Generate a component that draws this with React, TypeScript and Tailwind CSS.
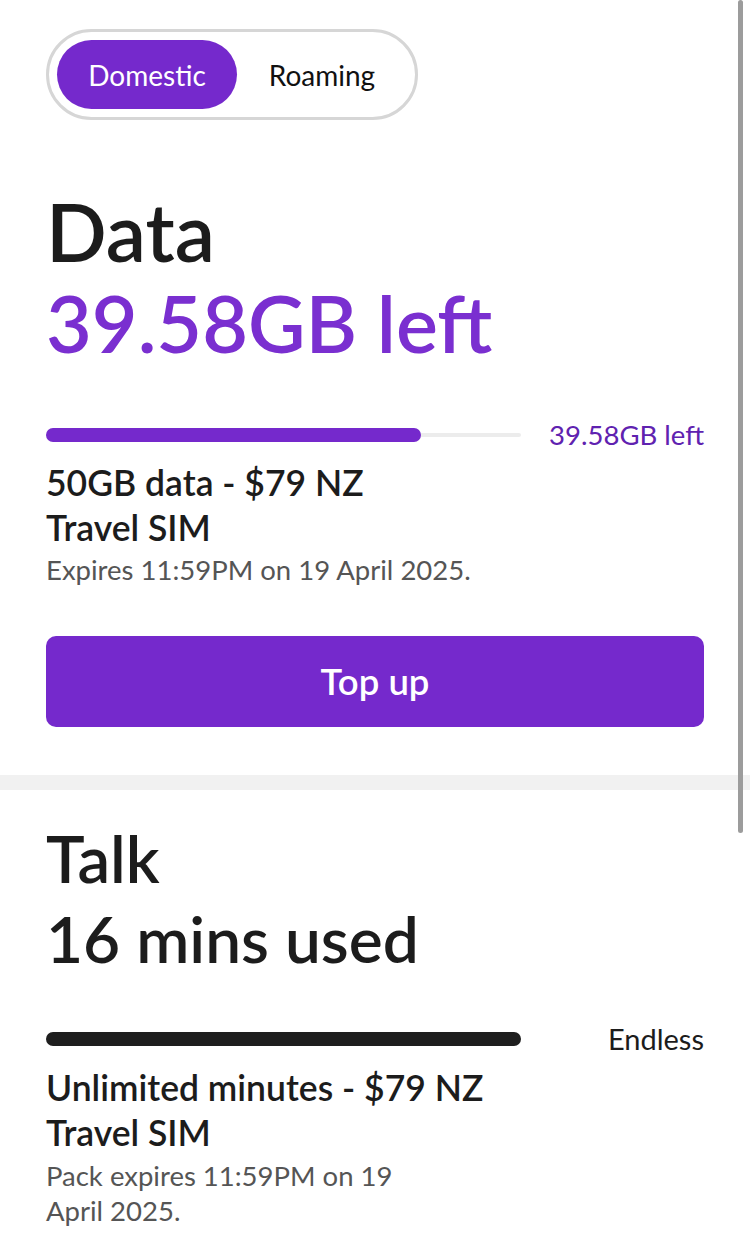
import { useState } from 'react';

const PURPLE = 'bg-[#7529cc]';

function UsageBar({ pct, fill, track, label, labelClass }: { pct: number; fill: string; track: string; label: string; labelClass: string }) {
  return (
    <div className="flex items-center h-[30px]">
      <div className="relative w-[475px] h-[14px] flex items-center">
        <div className={`absolute left-0 right-0 h-[4px] rounded-full ${track}`} />
        <div className={`relative h-[14px] rounded-full ${fill}`} style={{ width: `${pct}%` }} />
      </div>
      <span className={`ml-auto leading-[30px] ${labelClass}`}>{label}</span>
    </div>
  );
}

export default function App() {
  const [tab, setTab] = useState<'domestic' | 'roaming'>('domestic');

  return (
    <div className="relative w-[750px] min-h-[1246px] bg-white text-[#1c1c1c] overflow-hidden" style={{ fontFamily: 'Lato, "Noto Sans", sans-serif' }}>
      {/* scroll indicator */}
      <div className="absolute right-[7px] top-0 w-[5px] h-[833px] rounded-full bg-[#9c9c9c]" />

      <section className="px-[46px] pt-[29px] pb-[48px]">
        {/* tab switch */}
        <div className="inline-flex items-center p-[8px] border-[3px] border-[#d6d6d6] rounded-full">
          <button
            onClick={() => setTab('domestic')}
            className={`w-[180px] h-[69px] rounded-full text-[28px] ${tab === 'domestic' ? `${PURPLE} text-white` : 'text-[#111]'}`}
          >
            Domestic
          </button>
          <button
            onClick={() => setTab('roaming')}
            className={`w-[170px] h-[69px] rounded-full text-[28px] ${tab === 'roaming' ? `${PURPLE} text-white` : 'text-[#111]'}`}
          >
            Roaming
          </button>
        </div>

        <h2 className="mt-[71px] text-[80px] leading-[80px] font-semibold">Data</h2>
        <p className="mt-[12px] text-[79px] leading-[80px] font-semibold text-[#7a2fd0]">39.58GB left</p>

        <div className="mt-[57px]">
          <UsageBar pct={79} fill={PURPLE} track="bg-[#ececec]" label="39.58GB left" labelClass="text-[27.5px] text-[#5f22b0]" />
        </div>

        <p className="mt-[10px] text-[35.5px] leading-[45px] font-semibold">50GB data - $79 NZ</p>
        <p className="text-[35.5px] leading-[45px] font-semibold">Travel SIM</p>
        <p className="mt-[2px] text-[27.5px] leading-[35px] text-[#555]">Expires 11:59PM on 19 April 2025.</p>

        <button className={`mt-[49px] w-full h-[91px] rounded-[10px] ${PURPLE} text-white text-[36.5px] font-semibold`}>
          Top up
        </button>
      </section>

      <div className="h-[15px] bg-[#f1f1f1]" />

      <section className="px-[46px] pt-[33px] pb-[24px]">
        <h2 className="text-[65px] leading-[70px] font-semibold">Talk</h2>
        <p className="mt-[11px] text-[64px] leading-[70px] font-semibold">16 mins used</p>

        <div className="mt-[50px]">
          <UsageBar pct={100} fill="bg-[#1e1e1e]" track="bg-[#ececec]" label="Endless" labelClass="text-[29px] text-[#1c1c1c]" />
        </div>

        <p className="mt-[11px] text-[35.5px] leading-[45px] font-semibold">Unlimited minutes - $79 NZ</p>
        <p className="text-[35.5px] leading-[45px] font-semibold">Travel SIM</p>
        <p className="mt-[3px] max-w-[400px] text-[27.5px] leading-[35px] text-[#555]">Pack expires 11:59PM on 19 April 2025.</p>
      </section>
    </div>
  );
}
